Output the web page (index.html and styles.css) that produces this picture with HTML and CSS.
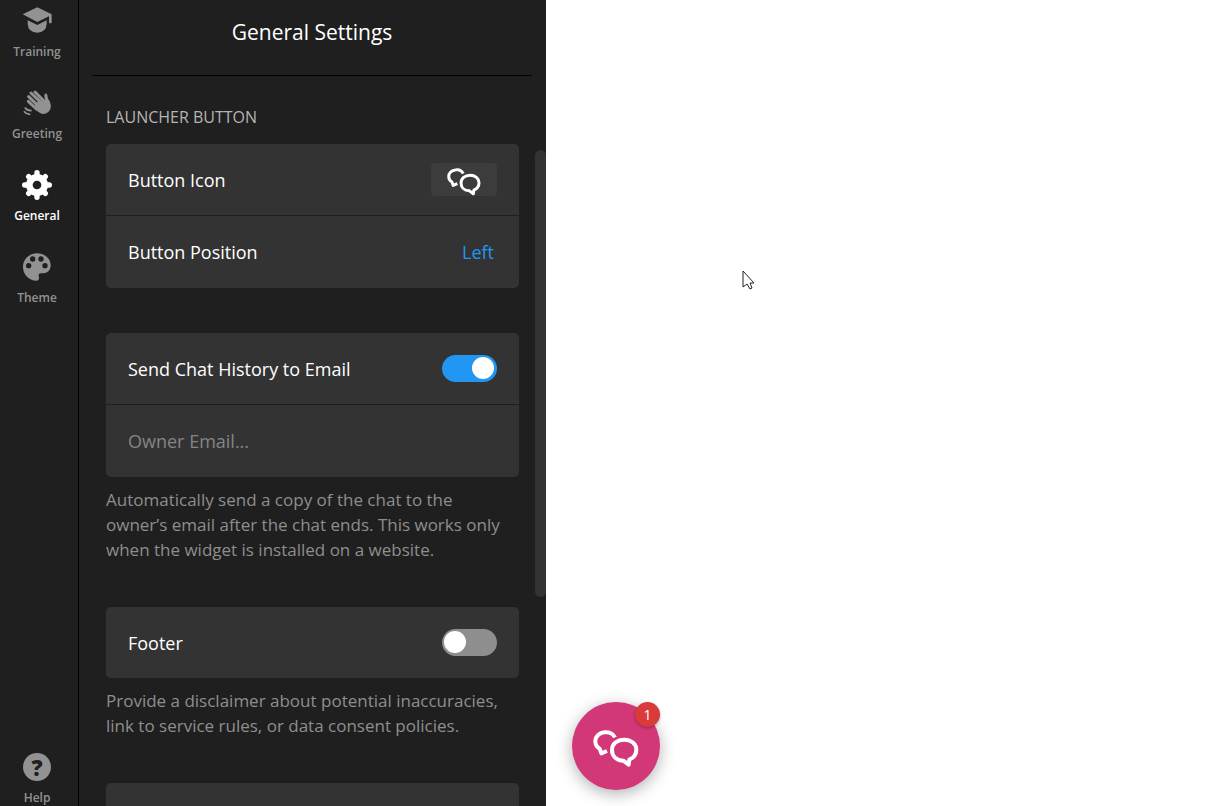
FILE: index.html
```html
<!DOCTYPE html>
<html lang="en">

    <head>
        <meta charset="UTF-8">
        <meta name="viewport" content="width=device-width, initial-scale=1.0">
        <title>General Settings</title>
        <link rel="stylesheet" href="styles.css">
    </head>

    <body>
        <!-- shared icon, used in the panel and in the launcher -->
        <svg class="sprite" aria-hidden="true">
            <symbol id="chat" viewBox="100 104 138 130">
                <path d="M166 143C160 131 146 126 134 128C119 129 107 141 107 155C107 165 111 172 120 177L125 191L142 184" />
                <path d="M207 225L191 213C170 212 157 199 157 181C157 163 172 150 194 150C214 150 230 163 230 180C230 194 222 204 209 210Z" />
            </symbol>
        </svg>
        <div class="app">
            <nav class="sidebar">
                <ul>
                    <li>
                        <a href="#training">
                            <svg viewBox="67 18 90 90">
                                <path d="M69 43L113 22L156 43V68Q152 72 148 68V49L113 66Z" />
                                <path d="M84 61L113 75L141 61V72Q139 98 113 98Q86 98 84 72Z" />
                            </svg>
                            <span>Training</span>
                        </a>
                    </li>
                    <li>
                        <a href="#greeting">
                            <svg viewBox="67 263 90 90">
                                <path d="M101 321L118 299L132 304C139 298 134 293 134 285C135 277 142 278 143 284L145 295Q150 299 153 312C156 329 145 341 130 341Q119 341 101 321Z" />
                                <g class="line">
                                    <path d="M86 303L110 326M87 289L118 319M94 278L124 307M106 275L131 300" stroke-width="9" />
                                    <path d="M77 323Q81 330 94 331M74 334Q79 341 90 342" stroke-width="5" />
                                </g>
                            </svg>
                            <span>Greeting</span>
                        </a>
                    </li>
                    <li>
                        <a href="#general" class="active">
                            <svg viewBox="-45 -45 90 90">
                                <g class="line">
                                    <circle r="23" stroke-width="20" />
                                    <path d="M0-28V-37M20-20L25-25M28 0H37M20 20L25 25M0 28V37M-20 20L-25 25M-28 0H-37M-20-20L-25-25" stroke-width="16" />
                                </g>
                            </svg>
                            <span>General</span>
                        </a>
                    </li>
                    <li>
                        <a href="#theme">
                            <svg viewBox="68 307 90 90">
                                <path fill-rule="evenodd" d="M111 393C88 393 71 374 71 352C71 329 89 311 113 311C137 311 154 327 154 347C154 362 144 371 131 371H124C117 372 117 377 119 383C120 389 117 393 111 393ZM80 348a8 8 0 1 0 16 0a8 8 0 1 0 -16 0M92 328a8 8 0 1 0 16 0a8 8 0 1 0 -16 0M117 328a8 8 0 1 0 16 0a8 8 0 1 0 -16 0M129 348a8 8 0 1 0 16 0a8 8 0 1 0 -16 0" />
                            </svg>
                            <span>Theme</span>
                        </a>
                    </li>
                </ul>
                <a href="#help">
                    <i class="help">?</i>
                    <span>Help</span>
                </a>
            </nav>

            <section class="panel">
                <h1>General Settings</h1>
                <form class="settings">
                    <h2>LAUNCHER BUTTON</h2>
                    <div class="group">
                        <div class="card">
                            <div class="row">
                                <span id="icon-label">Button Icon</span>
                                <button type="button" class="icon-btn" aria-labelledby="icon-label">
                                    <svg class="chat"><use href="#chat" /></svg>
                                </button>
                            </div>
                            <div class="row">
                                <label for="position">Button Position</label>
                                <select id="position">
                                    <option>Left</option>
                                    <option>Right</option>
                                </select>
                            </div>
                        </div>
                    </div>
                    <div class="group">
                        <div class="card">
                            <div class="row">
                                <label for="history">Send Chat History to Email</label>
                                <input type="checkbox" class="switch" id="history" checked>
                            </div>
                            <div class="row">
                                <input type="email" class="email" placeholder="Owner Email..." aria-label="Owner Email">
                            </div>
                        </div>
                        <p>Automatically send a copy of the chat to the owner’s email after the chat ends. This works only when the widget is installed on a website.</p>
                    </div>
                    <div class="group">
                        <div class="card">
                            <div class="row">
                                <label for="footer">Footer</label>
                                <input type="checkbox" class="switch" id="footer">
                            </div>
                        </div>
                        <p>Provide a disclaimer about potential inaccuracies, link to service rules, or data consent policies.</p>
                    </div>
                    <div class="group">
                        <div class="card">
                            <div class="row"></div>
                        </div>
                    </div>
                </form>
                <div class="scrollbar"></div>
            </section>

            <main class="preview">
                <svg class="cursor" viewBox="0 0 13 20">
                    <path d="M1 1V17L5 14L8 19L10 18L8 13H12Z" />
                </svg>
                <button type="button" class="launcher" aria-label="Open chat">
                    <svg class="chat"><use href="#chat" /></svg>
                    <span class="badge">1</span>
                </button>
            </main>
        </div>
    </body>

</html>
```
FILE: styles.css
```css
* {
    box-sizing: border-box;
    padding: 0;
    margin: 0;
    list-style: none;
}

body {
    background: #fff;
    font-family: "Open Sans", "Noto Sans", sans-serif;
    font-size: 18px;
    color: #fff;
}

button,
input,
select {
    border: none;
    font: inherit;
    color: inherit;
}

.sprite {
    position: absolute;
    width: 0;
    height: 0;
}

.app {
    display: flex;
    height: 100vh;
    overflow: hidden;
}

/* sidebar */
.sidebar {
    display: flex;
    flex: none;
    flex-direction: column;
    justify-content: space-between;
    width: 79px;
    padding: 6px 4px 0 0;
    border-right: 1px solid #000;
    background: #1f1f1f;
}

.sidebar ul {
    display: flex;
    flex-direction: column;
    gap: 28px;
}

.sidebar a {
    display: flex;
    flex-direction: column;
    align-items: center;
    gap: 8px;
    font-size: 12px;
    font-weight: 600;
    line-height: 16px;
    text-decoration: none;
    color: #929292;
}

.sidebar a.active {
    color: #fff;
}

.sidebar svg {
    width: 30px;
    height: 30px;
    fill: currentColor;
}

.sidebar .line {
    fill: none;
    stroke: currentColor;
    stroke-linecap: round;
}

.help {
    width: 28px;
    height: 28px;
    margin: 1px;
    border-radius: 50%;
    background: #929292;
    font-size: 22px;
    font-style: normal;
    font-weight: 800;
    line-height: 28px;
    text-align: center;
    color: #1f1f1f;
}

/* settings panel */
.panel {
    position: relative;
    flex: none;
    width: 467px;
    overflow: hidden;
    background: #1f1f1f;
}

.panel h1 {
    height: 76px;
    margin: 0 14px 0 13px;
    border-bottom: 1px solid #000;
    font-size: 21px;
    font-weight: 400;
    line-height: 64px;
    text-align: center;
}

.settings {
    padding: 29px 27px 0;
}

.settings h2 {
    margin-bottom: 15px;
    font-size: 16px;
    font-weight: 400;
    line-height: 24px;
    color: #b4b4b4;
}

.group {
    margin-bottom: 45px;
}

.group p {
    padding-right: 16px;
    margin-top: 10px;
    font-size: 17px;
    line-height: 25px;
    color: #8e8e8e;
}

.card {
    border-radius: 5px;
    background: #333;
}

.row {
    display: flex;
    align-items: center;
    justify-content: space-between;
    height: 71px;
    padding: 0 22px;
}

.row + .row {
    height: 73px;
    border-top: 1px solid #1f1f1f;
}

.chat {
    fill: none;
    stroke: #fff;
    stroke-width: 12px;
    stroke-linejoin: round;
}

.icon-btn {
    display: flex;
    align-items: center;
    justify-content: center;
    width: 66px;
    height: 33px;
    border-radius: 4px;
    background: #3c3c3c;
}

.icon-btn .chat {
    width: 34px;
    height: 32px;
}

select {
    appearance: none;
    padding: 0 3px;
    background: none;
    text-align: right;
    color: #2196f3;
}

.switch {
    appearance: none;
    width: 55px;
    height: 27px;
    padding: 2px;
    border-radius: 14px;
    background: #8e8e8e;
}

.switch::before {
    content: "";
    display: block;
    width: 22px;
    height: 22px;
    border-radius: 50%;
    background: #fff;
}

.switch:checked {
    background: #2196f3;
}

.switch:checked::before {
    margin-left: 28px;
}

.email {
    flex: 1;
    background: none;
    outline: none;
}

.email::placeholder {
    color: #858585;
}

.scrollbar {
    position: absolute;
    top: 150px;
    right: 0;
    width: 11px;
    height: 447px;
    border-radius: 6px;
    background: #333;
}

/* page preview */
.preview {
    position: relative;
    flex: 1;
}

.cursor {
    position: absolute;
    top: 270px;
    left: 196px;
    width: 13px;
    height: 20px;
    fill: #fff;
    stroke: #222;
}

.launcher {
    position: absolute;
    bottom: 16px;
    left: 26px;
    display: flex;
    align-items: center;
    justify-content: center;
    width: 88px;
    height: 88px;
    border-radius: 50%;
    background: #d23778;
    box-shadow: 0 4px 16px rgba(0, 0, 0, .3);
}

.launcher .chat {
    width: 46px;
    height: 44px;
}

.badge {
    position: absolute;
    top: 0;
    right: 0;
    width: 25px;
    height: 25px;
    border-radius: 50%;
    background: #d93a3a;
    box-shadow: 0 1px 3px rgba(0, 0, 0, .3);
    font-size: 14px;
    line-height: 25px;
    text-align: center;
}
```
